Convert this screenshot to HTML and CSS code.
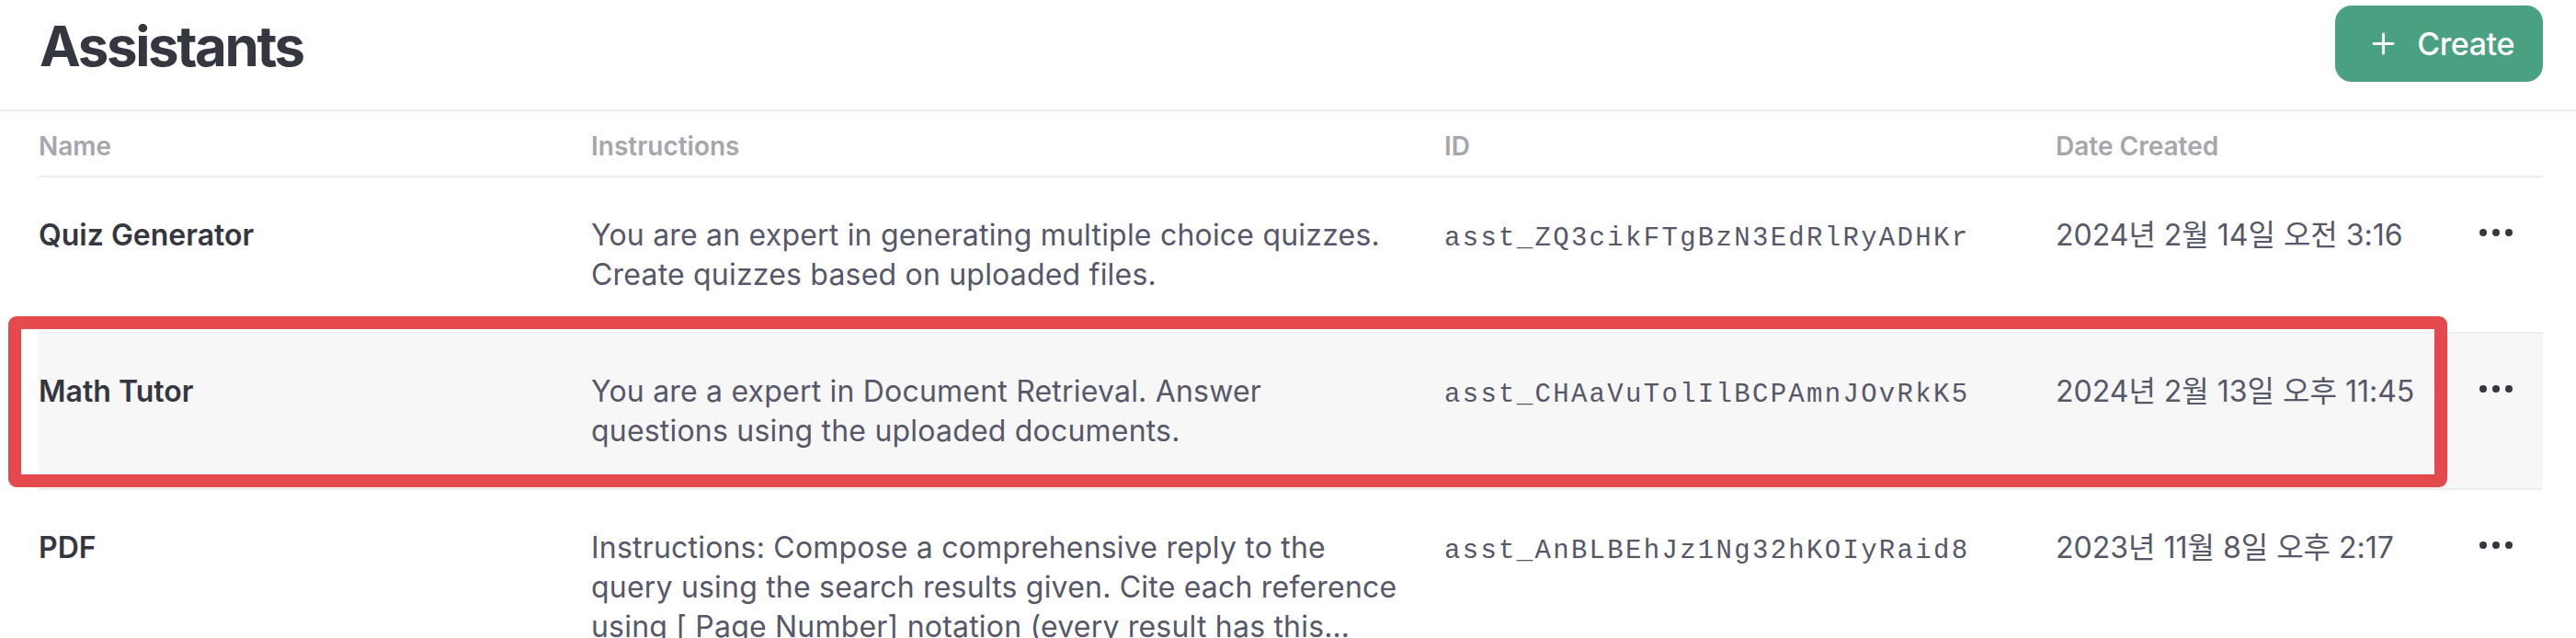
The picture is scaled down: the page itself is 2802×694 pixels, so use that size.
FILE: index.html
```html
<!DOCTYPE html>
<html lang="en">
<head>
<meta charset="utf-8">
<title>Assistants</title>
<link rel="stylesheet" href="styles.css">
</head>
<body>
<div class="page">
  <header class="topbar">
    <h1 class="title">Assistants</h1>
    <button class="create-btn" type="button">
      <svg class="plus" width="25" height="25" viewBox="0 0 25 25" aria-hidden="true">
        <path d="M12.5 2v21M2 12.5h21" stroke="#fff" stroke-width="3" stroke-linecap="round" fill="none"/>
      </svg>
      <span>Create</span>
    </button>
  </header>

  <div class="table">
    <div class="row head">
      <div class="cell">Name</div>
      <div class="cell">Instructions</div>
      <div class="cell">ID</div>
      <div class="cell">Date Created</div>
      <div class="cell"></div>
    </div>

    <div class="row">
      <div class="cell name">Quiz Generator</div>
      <div class="cell instr">You are an expert in generating multiple choice quizzes. Create quizzes based on uploaded files.</div>
      <div class="cell id">asst_ZQ3cikFTgBzN3EdRlRyADHKr</div>
      <div class="cell date">2024년 2월 14일 오전 3:16</div>
      <div class="cell actions"><svg class="dots" width="36" height="8" viewBox="0 0 36 8" aria-hidden="true"><circle cx="4" cy="4" r="4"/><circle cx="18" cy="4" r="4"/><circle cx="32" cy="4" r="4"/></svg></div>
    </div>

    <div class="row selected">
      <div class="cell name">Math Tutor</div>
      <div class="cell instr">You are a expert in Document Retrieval. Answer questions using the uploaded documents.</div>
      <div class="cell id">asst_CHAaVuTolIlBCPAmnJOvRkK5</div>
      <div class="cell date">2024년 2월 13일 오후 11:45</div>
      <div class="cell actions"><svg class="dots" width="36" height="8" viewBox="0 0 36 8" aria-hidden="true"><circle cx="4" cy="4" r="4"/><circle cx="18" cy="4" r="4"/><circle cx="32" cy="4" r="4"/></svg></div>
    </div>

    <div class="row">
      <div class="cell name">PDF</div>
      <div class="cell instr">Instructions: Compose a comprehensive reply to the query using the search results given. Cite each reference using [ Page Number] notation (every result has this number at the beginning). Citation should be done at the end of each sentence.</div>
      <div class="cell id">asst_AnBLBEhJz1Ng32hKOIyRaid8</div>
      <div class="cell date">2023년 11월 8일 오후 2:17</div>
      <div class="cell actions"><svg class="dots" width="36" height="8" viewBox="0 0 36 8" aria-hidden="true"><circle cx="4" cy="4" r="4"/><circle cx="18" cy="4" r="4"/><circle cx="32" cy="4" r="4"/></svg></div>
    </div>
  </div>

  <div class="highlight-box"></div>
</div>
</body>
</html>
```

FILE: styles.css
```css
html, body {
  margin: 0;
  padding: 0;
  background: #ffffff;
}

body {
  font-family: "Inter", "Noto Sans CJK KR", sans-serif;
  color: #353740;
  height: 694px;
  overflow: hidden;
}

.page {
  position: relative;
}

/* ---------- top bar ---------- */
.topbar {
  box-sizing: border-box;
  height: 121px;
  display: flex;
  align-items: flex-start;
  justify-content: space-between;
  padding: 6px 36px 0 43px;
  border-bottom: 2px solid #ececf1;
}

.title {
  margin: 8px 0 0 0;
  font-size: 60px;
  line-height: 72px;
  font-weight: 700;
  letter-spacing: -2.4px;
  color: #353740;
}

.create-btn {
  display: flex;
  align-items: center;
  gap: 24px;
  height: 83px;
  padding: 0 31px 0 40px;
  border: 0;
  border-radius: 18px;
  background: #4aa181;
  color: #ffffff;
  font-family: "Inter", sans-serif;
  font-size: 34px;
  font-weight: 500;
  letter-spacing: -0.4px;
  cursor: pointer;
}

.plus {
  display: block;
  flex: none;
}

/* ---------- table ---------- */
.table {
  margin: 0 36px 0 42px;
}

.row {
  display: grid;
  grid-template-columns: 601px 928px 665px 1fr 86px;
  align-items: baseline;
  padding: 41px 0;
  border-bottom: 2px solid #ececf1;
  font-size: 32px;
  line-height: 43px;
}

.row.head {
  padding: 20px 0 14px 0;
  font-size: 28px;
  line-height: 36px;
  font-weight: 600;
  color: #a6a6ad;
}

.row.selected {
  background: #f7f7f8;
}

.cell {
  min-width: 0;
}

.name {
  font-weight: 600;
  color: #353740;
}

.instr {
  color: #565869;
  letter-spacing: 0.2px;
  padding-right: 48px;
  display: -webkit-box;
  -webkit-box-orient: vertical;
  -webkit-line-clamp: 3;
  overflow: hidden;
}

.id {
  font-family: "Liberation Mono", monospace;
  font-size: 29px;
  letter-spacing: 2.3px;
  color: #565869;
}

.date {
  color: #565869;
  white-space: nowrap;
}

.actions {
  align-self: start;
  padding-left: 17px;
}

.dots {
  display: block;
  margin-top: 15px;
  fill: #353740;
}

/* ---------- annotation overlay ---------- */
.highlight-box {
  position: absolute;
  left: 9px;
  top: 344px;
  width: 2653px;
  height: 186px;
  box-sizing: border-box;
  border: 14px solid #e3494d;
  border-radius: 9px;
  pointer-events: none;
}
```
